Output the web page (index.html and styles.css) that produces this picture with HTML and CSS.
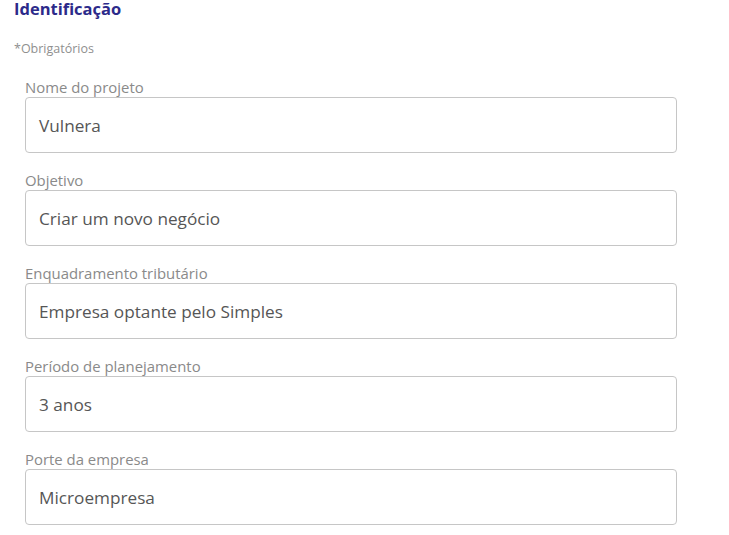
FILE: index.html
```html
<!DOCTYPE html>
<html lang="pt">
<head>
<meta charset="utf-8">
<link rel="stylesheet" href="styles.css">
</head>
<body>
<div class="page">
  <h1 class="title">Identificação</h1>
  <p class="required">*Obrigatórios</p>
  <form class="form">
    <div class="field">
      <label class="label">Nome do projeto</label>
      <div class="input">Vulnera</div>
    </div>
    <div class="field">
      <label class="label">Objetivo</label>
      <div class="input">Criar um novo negócio</div>
    </div>
    <div class="field">
      <label class="label">Enquadramento tributário</label>
      <div class="input">Empresa optante pelo Simples</div>
    </div>
    <div class="field">
      <label class="label">Período de planejamento</label>
      <div class="input">3 anos</div>
    </div>
    <div class="field">
      <label class="label">Porte da empresa</label>
      <div class="input">Microempresa</div>
    </div>
  </form>
</div>
</body>
</html>
```
FILE: styles.css
```css
* { box-sizing: border-box; }
html, body { margin: 0; padding: 0; background: #fff; }
body { font-family: "Open Sans", "Noto Sans", sans-serif; }
.page { padding: 0 0 0 14px; }
.title {
  margin: 0;
  font-size: 16.5px;
  line-height: 18px;
  font-weight: 700;
  color: #2c2a8a;
}
.required {
  margin: 24px 0 0 0;
  font-size: 12.5px;
  line-height: 14px;
  color: #8f8f8f;
}
.form {
  display: flex;
  flex-direction: column;
  gap: 17px;
  margin-top: 21px;
  padding-left: 11px;
  width: 663px;
}
.field { display: flex; flex-direction: column; }
.label {
  font-size: 14.9px;
  line-height: 20px;
  color: #8a8a8a;
}
.input {
  height: 56px;
  border: 1px solid #c6c6c6;
  border-radius: 4px;
  padding: 0 13px;
  display: flex;
  align-items: center;
  font-size: 17.2px;
  color: #565656;
}
```
